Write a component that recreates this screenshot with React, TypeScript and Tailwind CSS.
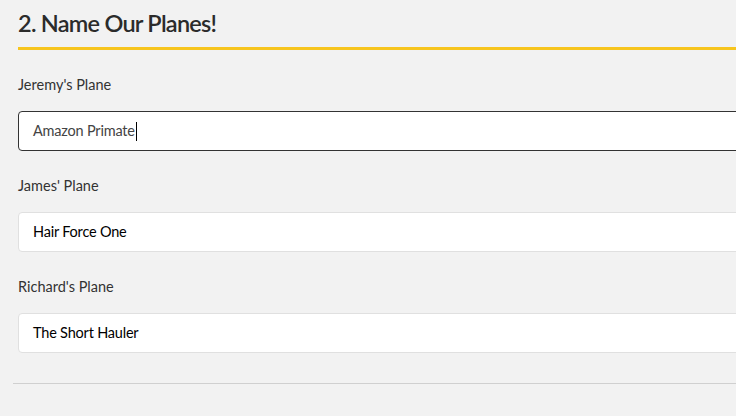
const planes = [
  { label: "Jeremy's Plane", value: 'Amazon Primate', focused: true },
  { label: "James' Plane", value: 'Hair Force One', focused: false },
  { label: "Richard's Plane", value: 'The Short Hauler', focused: false },
];

export default function App() {
  return (
    <div className="h-[416px] w-[736px] overflow-hidden bg-[#f2f2f2] font-['Lato',sans-serif] text-[#333]">
      <div className="ml-[18px] w-[760px]">
        <h2 className="pt-[8px] text-[23.5px] font-semibold leading-[30px] tracking-[-0.75px] text-[#2b2b2b]">
          2. Name Our Planes!
        </h2>
        <div className="mt-[9px] h-[3px] bg-[#f7c51e]" />

        <div className="mt-[26px] flex flex-col">
          {planes.map((p) => (
            <div key={p.label} className="flex flex-col">
              <label className="text-[14.5px] leading-[18px] text-[#333]">{p.label}</label>
              <div
                className={
                  p.focused
                    ? 'mt-[17px] mb-[26px] flex h-[40px] items-center rounded-[4px] border border-[#333] bg-white pl-[14px] text-[14.5px] tracking-[-0.2px] text-[#444]'
                    : 'mt-[17px] mb-[26px] flex h-[40px] items-center rounded-[4px] border border-[#e0e0e0] bg-white pl-[14px] text-[14.5px] tracking-[-0.2px] text-black'
                }
              >
                {p.value}
                {p.focused && <span className="ml-px h-[19px] w-px bg-black" />}
              </div>
            </div>
          ))}
        </div>

        <div className="-ml-[5px] mt-[4px] h-px bg-[#d0d0d0]" />
      </div>
    </div>
  );
}
